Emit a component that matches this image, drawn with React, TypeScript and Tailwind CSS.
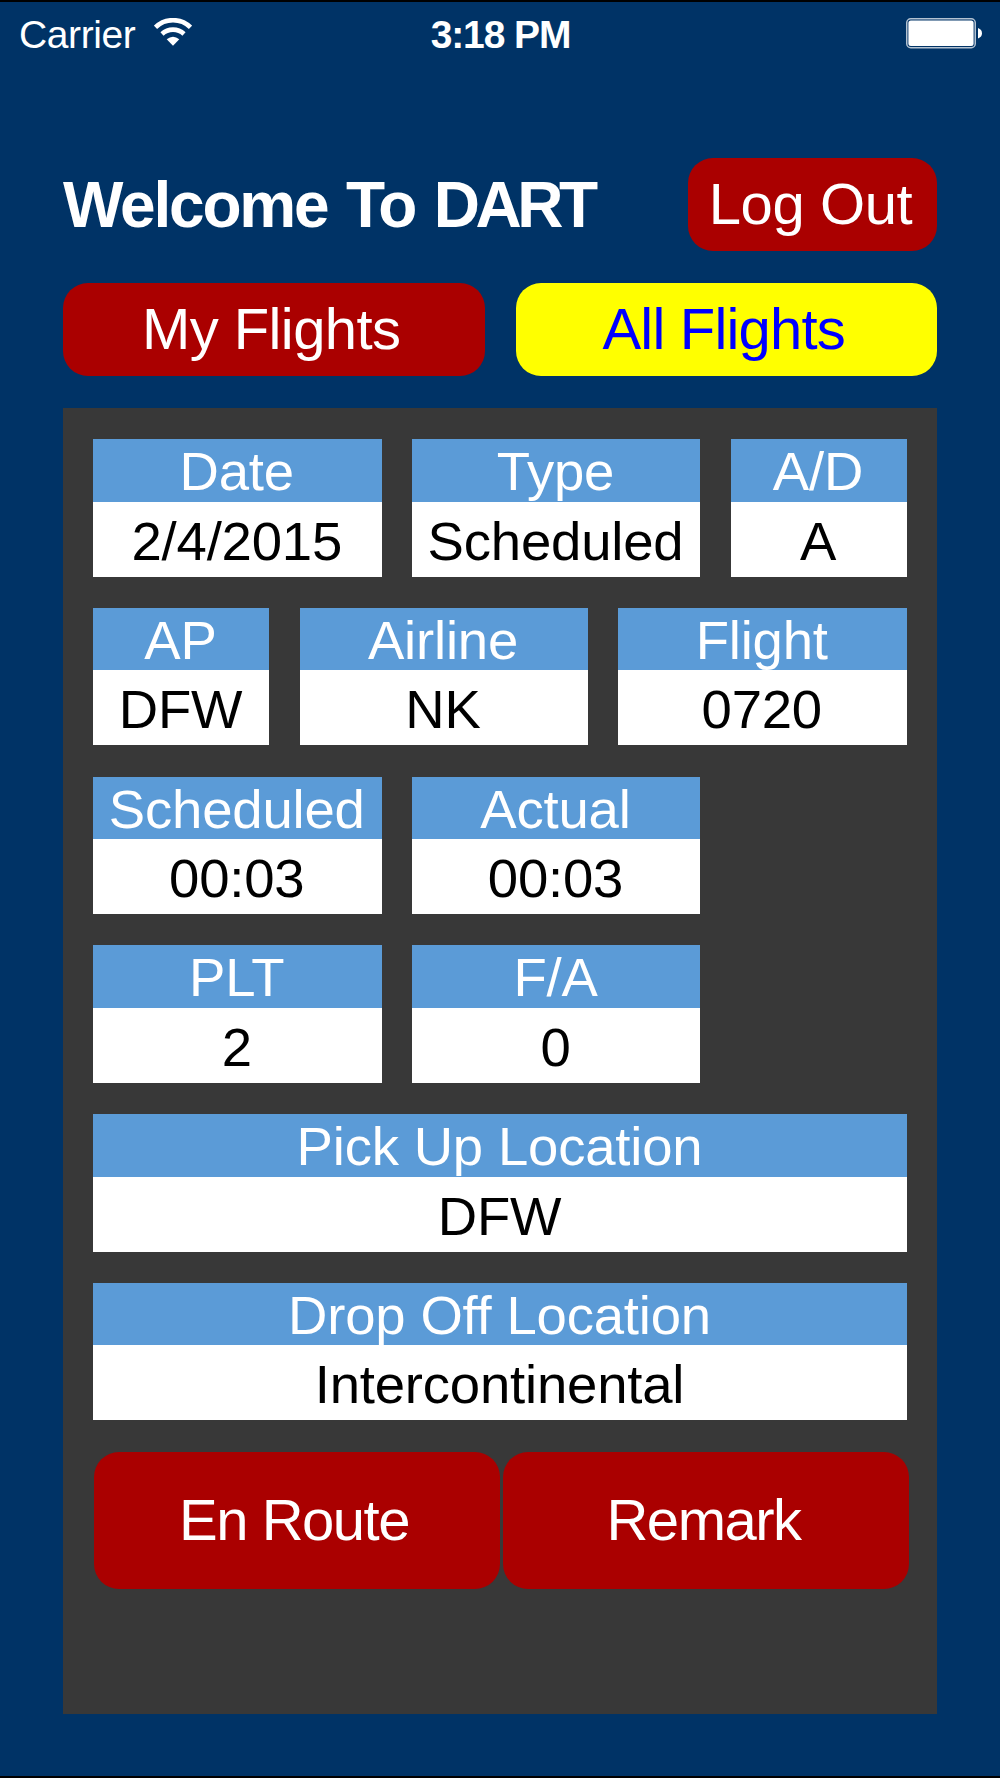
interface Field {
  label: string;
  value: string;
  width: string;
}

const WIDE = 'w-[288.5px]';
const MID = 'w-[288px]';
const NARROW = 'w-[176px]';
const FULL = 'w-[814px]';

const rows: Field[][] = [
  [
    { label: 'Date', value: '2/4/2015', width: WIDE },
    { label: 'Type', value: 'Scheduled', width: MID },
    { label: 'A/D', value: 'A', width: NARROW },
  ],
  [
    { label: 'AP', value: 'DFW', width: NARROW },
    { label: 'Airline', value: 'NK', width: MID },
    { label: 'Flight', value: '0720', width: WIDE },
  ],
  [
    { label: 'Scheduled', value: '00:03', width: WIDE },
    { label: 'Actual', value: '00:03', width: MID },
  ],
  [
    { label: 'PLT', value: '2', width: WIDE },
    { label: 'F/A', value: '0', width: MID },
  ],
  [{ label: 'Pick Up Location', value: 'DFW', width: FULL }],
  [{ label: 'Drop Off Location', value: 'Intercontinental', width: FULL }],
];

function WifiIcon() {
  return (
    <svg width="38" height="28" viewBox="0 0 38 28" fill="none">
      <path d="M1.5 9.3 A25 25 0 0 1 36.5 9.3" stroke="white" strokeWidth="4.6" />
      <path d="M8 16 A16 16 0 0 1 30 16" stroke="white" strokeWidth="4.6" />
      <path d="M12.7 21.2 Q19 16.2 25.3 21.2 L19 27.8 Z" fill="white" />
    </svg>
  );
}

function BatteryIcon() {
  return (
    <svg width="77" height="31" viewBox="0 0 77 31" fill="none">
      <rect x="0.75" y="0.75" width="68.5" height="29" rx="4" stroke="#b3c2d1" strokeWidth="1.5" />
      <rect x="2.4" y="2.4" width="65.2" height="25.7" rx="2.5" fill="white" />
      <path d="M72 10 Q76 11.5 76 15.3 Q76 19 72 20.6 Z" fill="white" />
    </svg>
  );
}

function StatusBar() {
  return (
    <div className="grid h-[64px] grid-cols-3 items-center pl-[19px] pr-[17px] text-[39px] leading-none">
      <div className="flex items-center">
        <span className="tracking-[-0.4px]">Carrier</span>
        <span className="ml-[19px] -mt-[4px]">
          <WifiIcon />
        </span>
      </div>
      <span className="pr-px text-center font-bold tracking-[-1.1px]">3:18 PM</span>
      <span className="-mt-px flex justify-end">
        <BatteryIcon />
      </span>
    </div>
  );
}

function FieldBox({ label, value, width }: Field) {
  return (
    <div className={`flex h-[137.5px] shrink-0 flex-col text-center text-[54.5px] tracking-[-0.2px] ${width}`}>
      <div className="h-[62.5px] bg-[#5b9bd7] pr-px leading-[66px] text-white">{label}</div>
      <div className="h-[75px] bg-white pr-px leading-[79px] text-black">{value}</div>
    </div>
  );
}

export default function App() {
  return (
    <div
      className="flex h-[1778px] w-[1000px] flex-col overflow-hidden border-y-2 border-black bg-[#003366] text-white"
      style={{ fontFamily: '"Liberation Sans", Arial, sans-serif' }}
    >
      <StatusBar />

      <div className="mt-[92px] flex h-[93px] items-center justify-between pl-[63px] pr-[63px]">
        <h1 className="pt-[2px] text-[64px] font-bold leading-[93px] tracking-[-2.2px] whitespace-nowrap [word-spacing:3px]">
          Welcome To <span className="tracking-[-4.4px]">DART</span>
        </h1>
        <button className="h-[93px] w-[249px] rounded-[25px] bg-[#aa0000] pr-[4px] pb-[2px] text-[58px] leading-none tracking-[-0.4px]">
          Log Out
        </button>
      </div>

      <div className="mt-8 flex justify-between px-[63px] text-[58px] leading-none">
        <button className="h-[93px] w-[421.5px] rounded-[25px] bg-[#aa0000] pr-[5px] pb-[2px] tracking-[-0.6px]">
          My Flights
        </button>
        <button className="h-[93px] w-[421.5px] rounded-[25px] bg-[#ffff00] pr-[5px] pb-[2px] tracking-[-0.8px] text-[#0000ff]">
          All Flights
        </button>
      </div>

      <main className="mx-[63px] mt-[31.75px] h-[1306.25px] bg-[#383838] pl-[30px] pt-[31.25px]">
        <div className="flex flex-col gap-[31.25px]">
          {rows.map((row, i) => (
            <div key={i} className="flex gap-[30.5px]">
              {row.map((field) => (
                <FieldBox key={field.label} {...field} />
              ))}
            </div>
          ))}
        </div>

        <div className="ml-px mt-[31.25px] flex gap-[3px] text-[58px] leading-none tracking-[-1.5px]">
          <button className="h-[137px] w-[406px] rounded-[25px] bg-[#aa0000] pr-[6px]">En Route</button>
          <button className="h-[137px] w-[406px] rounded-[25px] bg-[#aa0000] pr-[5px]">Remark</button>
        </div>
      </main>
    </div>
  );
}
